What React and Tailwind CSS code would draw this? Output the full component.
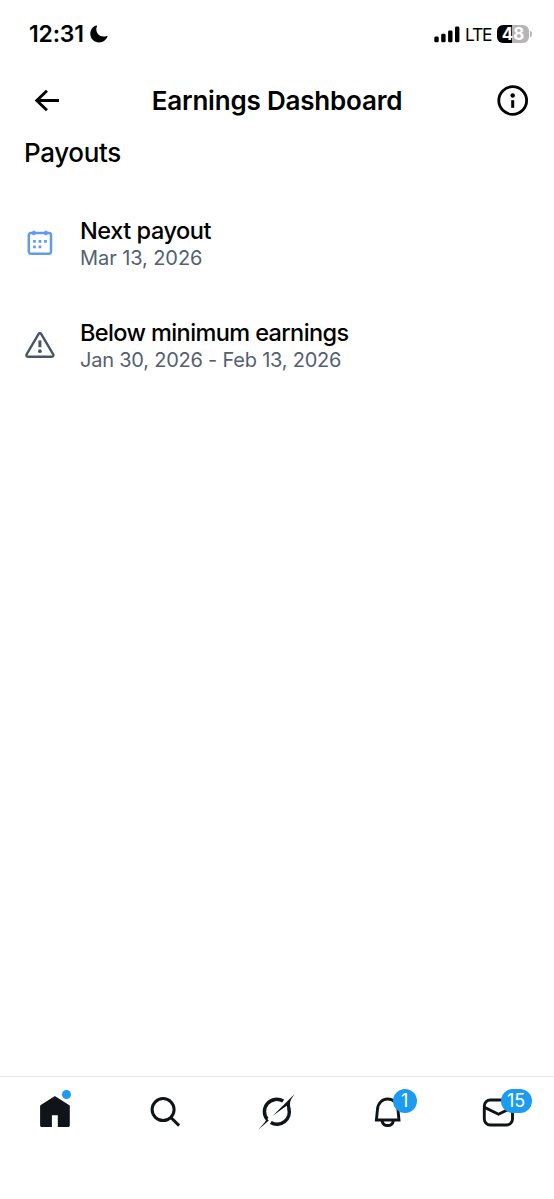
import React from 'react';

const MoonIcon = () => (
  <svg width="18" height="18" viewBox="0 0 18 18" fill="#000">
    <path d="M6.1 0.6C2.7 1.8 0.3 5 0.3 8.7c0 4.9 3.9 8.8 8.8 8.8 3.9 0 7.2-2.5 8.4-5.9 0.2-0.5-0.3-0.9-0.8-0.7-1 0.4-2 0.6-3.1 0.6-4.2 0-7.3-3.1-7.3-7.2 0-1 0.2-2 0.6-2.9 0.2-0.5-0.3-1-0.8-0.8z" />
  </svg>
);

const SignalIcon = () => (
  <svg width="26" height="17" viewBox="0 0 26 17" fill="#000">
    <rect x="0.3" y="10.4" width="4.4" height="5.9" rx="1.3" />
    <rect x="7.2" y="7.8" width="4.4" height="8.5" rx="1.3" />
    <rect x="14.1" y="4.4" width="4.4" height="11.9" rx="1.3" />
    <rect x="21" y="0.6" width="4.4" height="15.7" rx="1.3" />
  </svg>
);

const BackIcon = () => (
  <svg width="27" height="24" viewBox="0 0 27 24" fill="none" stroke="#000" strokeWidth="2.9">
    <path d="M13.9 1.7L3.8 11.5l10.1 9.8M4 11.5h22" />
  </svg>
);

const InfoIcon = () => (
  <svg width="32" height="32" viewBox="0 0 32 32" fill="none">
    <circle cx="15.7" cy="15.5" r="13.9" stroke="#000" strokeWidth="2.8" />
    <circle cx="15.7" cy="10.5" r="2.2" fill="#000" />
    <path d="M15.7 15.2v7.6" stroke="#000" strokeWidth="3" />
  </svg>
);

const CalendarIcon = () => (
  <svg width="32" height="32" viewBox="0 0 32 32" fill="none" stroke="#609bf0">
    <rect x="4.8" y="5" width="22.2" height="20.8" rx="2.2" strokeWidth="2.5" />
    <path d="M9.9 2.8v4.4M21.9 2.8v4.4" strokeWidth="2.7" />
    <path d="M9.1 13.4h2.7M14.6 13.4h2.7M20.1 13.4h2.7M9.1 18.8h2.7M14.6 18.8h2.7" strokeWidth="2.7" />
  </svg>
);

const WarningIcon = () => (
  <svg width="32" height="32" viewBox="0 0 32 32" fill="none" stroke="#4b5563">
    <path d="M14.5 4.1L2.6 24.4c-0.6 1.1 0.1 2.4 1.3 2.4h24c1.2 0 1.9-1.3 1.3-2.4L17.3 4.1c-0.6-1.1-2.2-1.1-2.8 0z" strokeWidth="2.4" />
    <path d="M15.9 10.4v6.8" strokeWidth="3" />
    <circle cx="15.9" cy="21.2" r="1.9" fill="#4b5563" stroke="none" />
  </svg>
);

const HomeIcon = () => (
  <svg width="40" height="40" viewBox="0 0 40 40" fill="#0f1419">
    <path d="M19.1 4.4c0.5-0.3 1-0.3 1.5 0l13.4 8.6c0.5 0.3 0.8 0.8 0.8 1.3v19.2c0 0.9-0.7 1.5-1.6 1.5H22.8V23.2h-5.9V35H6.7c-0.9 0-1.6-0.6-1.6-1.5V14.3c0-0.5 0.3-1 0.7-1.3z" />
  </svg>
);

const SearchIcon = () => (
  <svg width="40" height="40" viewBox="0 0 40 40" fill="none" stroke="#0f1419" strokeWidth="3">
    <circle cx="17.1" cy="17.6" r="11" />
    <path d="M24.9 25.5l8.2 8.1" />
  </svg>
);

const GrokIcon = () => (
  <svg width="40" height="40" viewBox="0 0 40 40" fill="#0f1419">
    <path d="M26.2 9.1A12.3 12.3 0 0 0 10.1 27.2" fill="none" stroke="#0f1419" strokeWidth="3.5" />
    <path d="M13.8 30.4A12.2 12.2 0 0 0 31.8 16.5" fill="none" stroke="#0f1419" strokeWidth="3.5" />
    <path d="M8.9 25.6c0.8 2.4-0.4 4-2.4 6.2L1.5 37.6 11.8 28.4z" />
    <path d="M37.6 2L15.8 23.7l13.9-10c0.4 1 0.5 2 0.5 3.3l3.4-0.2c-0.8-3.5-0.9-6.4 0.3-9 0.9-1.7 2.4-3.7 3.7-5.8z" />
  </svg>
);

const BellIcon = () => (
  <svg width="40" height="40" viewBox="0 0 40 40" fill="none" stroke="#0f1419" strokeWidth="2.9">
    <path d="M8.4 28L9.5 17.1C10 11 14.5 7 19.7 7s9.7 4 10.2 10.1L31 28z" />
    <path d="M14 28.4c0.5 3.1 2.8 5.1 5.7 5.1s5.2-2 5.7-5.1" />
  </svg>
);

const MailIcon = () => (
  <svg width="40" height="40" viewBox="0 0 40 40" fill="none" stroke="#0f1419" strokeWidth="2.9">
    <rect x="5.3" y="8" width="28.2" height="25" rx="6" />
    <path d="M5.5 15.4l14 6.8 13.8-6.8" />
  </svg>
);

const payouts = [
  { title: 'Next payout', date: 'Mar 13, 2026', Icon: CalendarIcon, titleSpacing: 'tracking-[-0.45px]', dateSpacing: 'tracking-[-0.08px]' },
  { title: 'Below minimum earnings', date: 'Jan 30, 2026 - Feb 13, 2026', Icon: WarningIcon, titleSpacing: 'tracking-[-0.61px]', dateSpacing: 'tracking-[-0.22px]' },
];

const tabs = [
  { name: 'Home', Icon: HomeIcon, dot: true },
  { name: 'Search', Icon: SearchIcon },
  { name: 'Grok', Icon: GrokIcon },
  { name: 'Notifications', Icon: BellIcon, count: 1, badge: 'left-[25px] w-[24px]' },
  { name: 'Messages', Icon: MailIcon, count: 15, badge: 'left-[22px] w-[31px]' },
];

const StatusBar = () => (
  <div className="flex h-[68px] items-center justify-between pl-[29px] pr-[22px]">
    <div className="flex items-center gap-[6px]">
      <span className="text-[23px] font-semibold leading-none tracking-[-0.2px]">12:31</span>
      <MoonIcon />
    </div>
    <div className="flex items-center">
      <SignalIcon />
      <span className="ml-[5px] mt-[2px] w-[26px] text-[17.5px] leading-none tracking-[-1.3px]">LTE</span>
      <div className="ml-[6px] flex h-[18px] w-[32px] items-center justify-center rounded-[6px] bg-linear-to-r from-black from-48% to-[#b5b5b5] to-48% text-[17px] font-bold leading-none text-white">
        48
      </div>
      <div className="ml-[1px] h-[6px] w-[2px] rounded-r-full bg-[#b5b5b5]" />
    </div>
  </div>
);

const TabBar = () => (
  <nav className="grid h-[123px] grid-cols-5 items-start justify-items-center border-t border-[#e3e8ec] pt-[15px]">
    {tabs.map(({ name, Icon, dot, count, badge }) => (
      <button key={name} aria-label={name} className="relative size-10">
        <Icon />
        {dot && <span className="absolute left-[27px] top-[-2px] size-[9px] rounded-full bg-[#1d9bf0]" />}
        {count && (
          <span className={`absolute top-[-3px] flex h-[24px] items-center justify-center rounded-full bg-[#1d9bf0] text-[18px] leading-none text-white ${badge}`}>
            {count}
          </span>
        )}
      </button>
    ))}
  </nav>
);

const App = () => (
  <div className="flex h-[1199px] w-[554px] flex-col overflow-hidden bg-white font-['Inter',sans-serif] text-black">
    <StatusBar />

    <header className="flex h-[65px] items-center justify-between px-[25px]">
      <button aria-label="Back" className="w-10 pl-[8px]">
        <BackIcon />
      </button>
      <h1 className="text-[26px] font-semibold leading-none tracking-[-0.2px]">Earnings Dashboard</h1>
      <button aria-label="Info" className="flex w-10 justify-end">
        <InfoIcon />
      </button>
    </header>

    <main className="flex-1 px-6">
      <h2 className="pt-[4px] text-[26px] font-medium leading-8 tracking-[-0.35px]">Payouts</h2>
      <ul className="mt-[47px] space-y-[46px]">
        {payouts.map(({ title, date, Icon, titleSpacing, dateSpacing }) => (
          <li key={title} className="flex h-[56px] items-center gap-6">
            <Icon />
            <div>
              <p className={`text-[23.5px] font-medium leading-[28px] ${titleSpacing}`}>{title}</p>
              <p className={`text-[20px] leading-[27px] text-[#536071] ${dateSpacing}`}>{date}</p>
            </div>
          </li>
        ))}
      </ul>
    </main>

    <TabBar />
  </div>
);

export default App;
